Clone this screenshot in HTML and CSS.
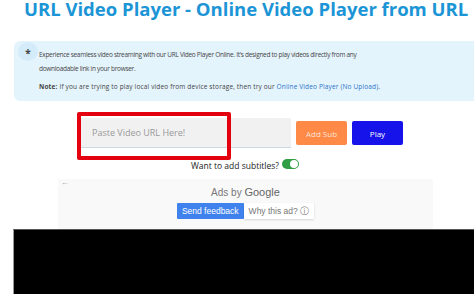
FILE: index.html
```html
<!DOCTYPE html>
<html>
  <head>
    <meta charset="utf-8" />
    <meta name="viewport" content="width=device-width, initial-scale=1.0" />
    <title>URL Video Player - Online Video Player from URL</title>
    <link rel="stylesheet" href="styles.css">
  </head>
  <body>
    <h1 class="page-title">URL Video Player - Online Video Player from URL</h1>

    <!-- 说明 -->
    <div class="info-box">
      <div class="info-icon"><span>*</span></div>
      <div class="info-text">
        <p>Experience seamless video streaming with our URL Video Player Online. It's designed to play videos directly from any<br>downloadable link in your browser.</p>
        <p class="note"><b>Note:</b> If you are trying to play local video from device storage, then try our <a href="#">Online Video Player (No Upload)</a>.</p>
      </div>
    </div>

    <!-- 输入 -->
    <div class="player-form">
      <div class="url-field">
        <input type="text" class="url-input" placeholder="Paste Video URL Here!" />
        <div class="highlight-frame"></div>
      </div>
      <button class="btn btn-sub">Add Sub</button>
      <button class="btn btn-play">Play</button>
    </div>

    <div class="subtitle-row">
      <span>Want to add subtitles?</span>
      <span class="toggle"><span class="knob"></span></span>
    </div>

    <!-- 广告 -->
    <div class="ad-box">
      <div class="ad-back">&larr;</div>
      <div class="ad-label">Ads by <span class="google">Google</span></div>
      <div class="ad-actions">
        <span class="ad-feedback">Send feedback</span>
        <span class="ad-why">Why this ad? &#9432;</span>
      </div>
    </div>

    <div class="video-area"></div>
  </body>
</html>
```

FILE: styles.css
```css
* {
  margin: 0;
  padding: 0;
  box-sizing: border-box;
}

body {
  font-family: "Open Sans", "Noto Sans", sans-serif;
  background-color: #fff;
  color: #333;
  overflow: hidden;
}

.page-title {
  font-size: 18.5px;
  line-height: 17px;
  font-weight: bold;
  color: #1b95d6;
  padding-left: 24px;
  white-space: nowrap;
}

.info-box {
  display: flex;
  margin: 24px 0 0 14px;
  height: 60px;
  background-color: #e4f4fd;
  border-radius: 6px 0 0 6px;
}

.info-icon {
  width: 20px;
  height: 19px;
  margin: 1px 0 0 4px;
  border-radius: 50%;
  background-color: #d4ecf9;
  display: flex;
  justify-content: center;
  padding-top: 6px;
  font-size: 10px;
  line-height: 10px;
  font-weight: bold;
  color: #444;
}

.info-text {
  padding: 7px 0 0 1px;
  font-size: 6.5px;
  line-height: 14px;
  color: #444;
  letter-spacing: -0.3px;
  white-space: nowrap;
}

.info-text p {
  margin-bottom: 4px;
}

.info-text .note {
  letter-spacing: 0.15px;
}

.info-text a {
  color: #2a73c9;
  text-decoration: none;
}

.player-form {
  display: flex;
  align-items: center;
  gap: 5px;
  margin: 17px 0 0 80px;
}

.url-field {
  position: relative;
}

.url-input {
  display: block;
  width: 211px;
  height: 30px;
  border: none;
  border-bottom: 1px solid #c9d9e6;
  background-color: #f1f1f1;
  padding-left: 12px;
  font-family: inherit;
  font-size: 9px;
  outline: none;
}

.url-input::placeholder {
  color: #999;
}

.highlight-frame {
  position: absolute;
  left: -3px;
  top: -6px;
  width: 154px;
  height: 48px;
  border: 4px solid #e4000f;
  border-radius: 2px;
}

.btn {
  width: 51px;
  height: 24px;
  border: none;
  border-radius: 2px;
  color: #fff;
  font-family: inherit;
  font-size: 8px;
}

.btn-sub {
  background-color: #ff8a48;
  color: #fde3d2;
}

.btn-play {
  background-color: #1612ea;
}

.subtitle-row {
  display: flex;
  align-items: center;
  justify-content: center;
  gap: 3px;
  padding-left: 16px;
  margin-top: 12px;
  font-size: 8.5px;
  color: #222;
}

.toggle {
  width: 17px;
  height: 10px;
  border-radius: 5px;
  background-color: #2f9e44;
  display: flex;
  justify-content: flex-end;
  padding: 1px;
  margin-top: -3px;
}

.knob {
  width: 8px;
  height: 8px;
  border-radius: 50%;
  background-color: #fff;
}

.ad-box {
  margin: 8px 0 0 58px;
  width: 375px;
  height: 50px;
  background-color: #f9f9f9;
  display: flex;
  flex-direction: column;
  align-items: center;
  font-family: "Liberation Sans", Arial, sans-serif;
}

.ad-back {
  align-self: flex-start;
  font-size: 8px;
  line-height: 6px;
  color: #999;
  margin: 1px 0 0 3px;
}

.ad-label {
  font-size: 10px;
  line-height: 12px;
  color: #777;
}

.ad-label .google {
  font-size: 11px;
  color: #666;
}

.ad-actions {
  display: flex;
  margin-top: 4px;
  font-size: 8.5px;
  line-height: 16px;
}

.ad-feedback {
  background-color: #3f82ee;
  color: #fff;
  padding: 0 5px;
  border-radius: 1px;
}

.ad-why {
  background-color: #fff;
  color: #777;
  padding: 0 5px;
  box-shadow: 0 1px 2px rgba(0, 0, 0, 0.15);
}

.video-area {
  margin-left: 13px;
  height: 70px;
  background-color: #000;
  border-left: 1px solid #999;
  border-top: 1px solid #555;
}
```
